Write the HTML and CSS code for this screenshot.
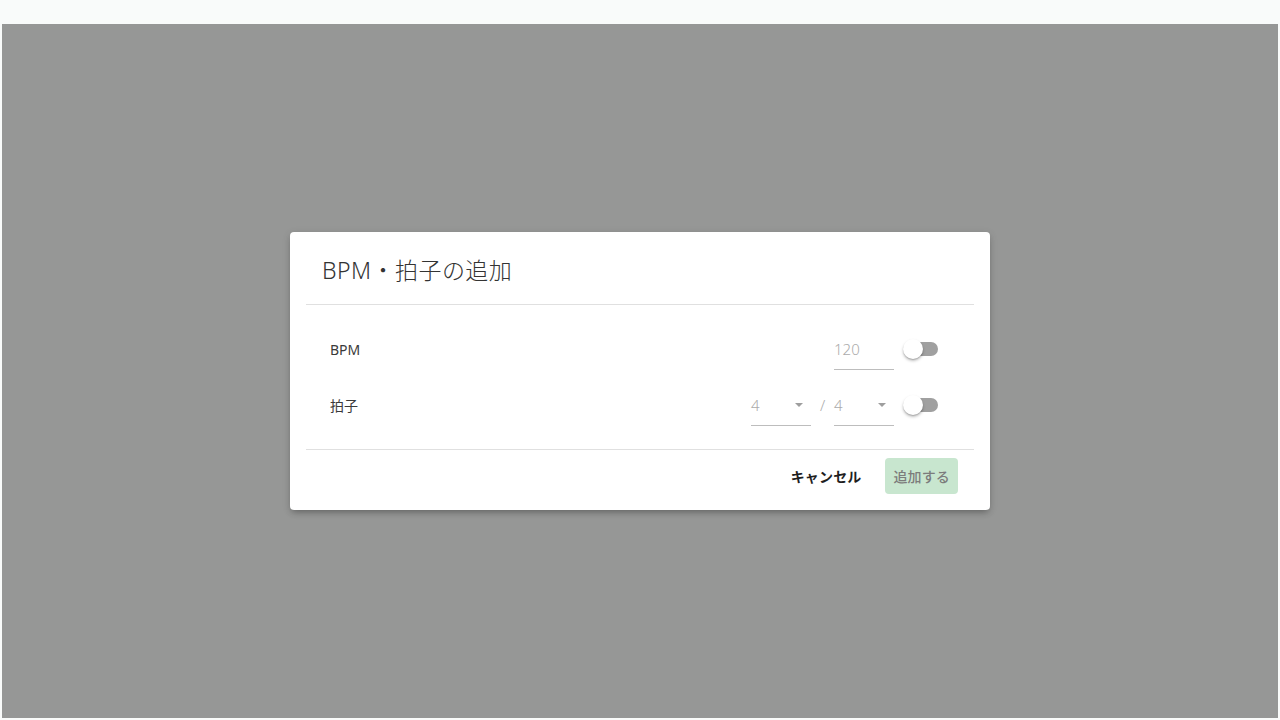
FILE: index.html
```html
<!DOCTYPE html>
<html lang="ja">
<head>
<meta charset="utf-8">
<title>BPM・拍子の追加</title>
<link rel="stylesheet" href="styles.css">
</head>
<body>
<div class="app">
  <header class="topbar"></header>
  <div class="overlay">
    <div class="dialog">
      <div class="dialog-title">BPM・拍子の追加</div>
      <hr class="divider">
      <div class="dialog-body">
        <div class="row">
          <span class="label">BPM</span>
          <div class="controls">
            <div class="field"><span class="value">120</span></div>
            <div class="switch"><span class="track"></span><span class="thumb"></span></div>
          </div>
        </div>
        <div class="row">
          <span class="label">拍子</span>
          <div class="controls">
            <div class="field select"><span class="value">4</span><span class="arrow"></span></div>
            <span class="slash">/</span>
            <div class="field select"><span class="value">4</span><span class="arrow"></span></div>
            <div class="switch"><span class="track"></span><span class="thumb"></span></div>
          </div>
        </div>
      </div>
      <hr class="divider">
      <div class="actions">
        <button class="btn btn-text" type="button">キャンセル</button>
        <button class="btn btn-primary" type="button" disabled>追加する</button>
      </div>
    </div>
  </div>
</div>
</body>
</html>
```

FILE: styles.css
```css
* { box-sizing: border-box; }

html, body {
  margin: 0;
  padding: 0;
  height: 100%;
}

body {
  background: #f9fbfa;
  font-family: "Noto Sans", "Noto Sans CJK JP", sans-serif;
  color: #222;
}

.app {
  display: flex;
  flex-direction: column;
  height: 720px;
}

.topbar {
  height: 24px;
  flex: none;
}

.overlay {
  flex: 1;
  margin: 0 2px 2px 2px;
  background: #969796;
  display: flex;
  align-items: center;
  justify-content: center;
}

.dialog {
  width: 700px;
  background: #fff;
  border-radius: 4px;
  padding: 0 16px;
  box-shadow: 0 4px 6px -2px rgba(0,0,0,0.25), 0 2px 8px rgba(0,0,0,0.12);
}

.dialog-title {
  height: 72px;
  display: flex;
  align-items: center;
  padding: 2px 16px 0 16px;
  font-size: 23px;
  font-weight: 300;
  color: #333;
  letter-spacing: 0.02em;
}

.divider {
  border: 0;
  border-top: 1px solid #e0e0e0;
  margin: 0;
}

.dialog-body {
  padding: 16px 0;
}

.row {
  height: 56px;
  display: flex;
  align-items: center;
  justify-content: space-between;
  padding: 0 36px 0 24px;
}

.label {
  font-size: 14px;
  color: #3a3a3a;
}

.controls {
  display: flex;
  align-items: center;
}

.field {
  width: 60px;
  height: 40px;
  margin-top: 1px;
  border-bottom: 1px solid #bdbdbd;
  display: flex;
  align-items: center;
  justify-content: space-between;
  font-size: 15px;
  color: #ababab;
}

.field .value {
  font-weight: 300;
}

.arrow {
  width: 0;
  height: 0;
  border-left: 4.5px solid transparent;
  border-right: 4.5px solid transparent;
  border-top: 4.5px solid #9e9e9e;
  margin-right: 8px;
}

.slash {
  width: 23px;
  text-align: center;
  font-size: 15px;
  font-weight: 300;
  color: #ababab;
}

.switch {
  position: relative;
  width: 36px;
  height: 20px;
  margin-left: 8px;
}

.track {
  position: absolute;
  left: 4px;
  right: 0;
  top: 3px;
  height: 14px;
  border-radius: 7px;
  background: #a0a0a0;
}

.thumb {
  position: absolute;
  left: 1px;
  top: 0;
  width: 20px;
  height: 20px;
  border-radius: 50%;
  background: #fff;
  box-shadow: 0 2px 3px rgba(0,0,0,0.25), 0 1px 1px rgba(0,0,0,0.14);
}

.actions {
  height: 60px;
  display: flex;
  align-items: flex-start;
  justify-content: flex-end;
  gap: 8px;
  padding: 8px 16px 0 0;
}

.btn {
  height: 36px;
  border: 0;
  border-radius: 4px;
  font-family: inherit;
  font-size: 14px;
  font-weight: 700;
  letter-spacing: 0.01em;
  background: transparent;
  cursor: pointer;
}

.btn-text {
  padding: 0 16px;
  color: #1f1f1f;
}

.btn-primary {
  padding: 0 8px;
  background: #c8e6cf;
  color: #7c7c7c;
  font-weight: 500;
}
```
